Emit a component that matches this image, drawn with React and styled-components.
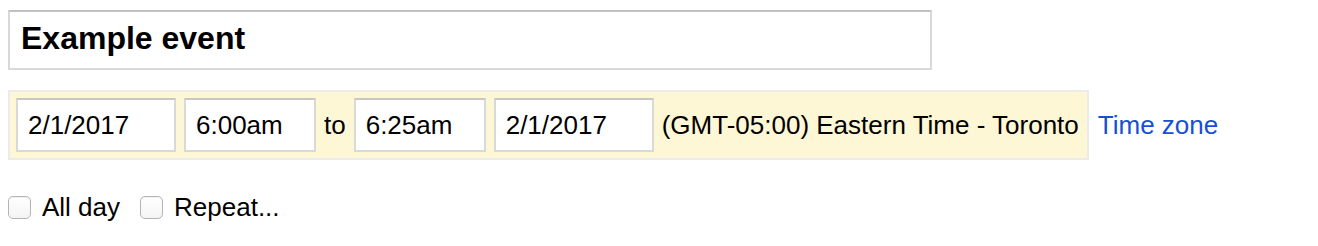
import React from 'react'
import styled, { createGlobalStyle } from 'styled-components';

const GlobalStyle = createGlobalStyle`
  body {
    margin: 0;
    background: #fff;
    font-family: "Liberation Sans", Arial, sans-serif;
    color: #000;
  }
`;

const Page = styled.div`
  padding: 10px 8px;
`;

const TitleInput = styled.input`
  display: block;
  box-sizing: border-box;
  width: 924px;
  height: 60px;
  margin: 0 0 20px;
  padding: 0 11px 3px;
  border: 2px solid #d9d9d9;
  border-top-color: #c1c1c1;
  font-family: inherit;
  font-size: 32px;
  font-weight: bold;
  color: #000;
  outline: none;
`;

const WhenRow = styled.div`
  display: flex;
  align-items: center;
`;

const DateBox = styled.div`
  display: flex;
  align-items: center;
  gap: 8px;
  padding: 6px 8px 6px 6px;
  background: #fdf7d6;
  border: 2px solid #ebebeb;
`;

const Field = styled.input`
  box-sizing: border-box;
  width: ${p => p.$wide ? 160 : 132}px;
  height: 54px;
  padding: 0 10px;
  border: 2px solid #d9d9d9;
  border-top-color: #c6c6c6;
  background: #fff;
  font-family: inherit;
  font-size: 26px;
  color: #000;
  outline: none;
`;

const Label = styled.span`
  font-size: 26px;
  line-height: 30px;
  white-space: nowrap;
`;

const Link = styled.a`
  margin-left: 9px;
  font-size: 26px;
  color: #1550d6;
  text-decoration: none;
  cursor: pointer;
`;

const Options = styled.div`
  display: flex;
  align-items: center;
  margin-top: 32px;
`;

const Check = styled.label`
  display: flex;
  align-items: center;
  gap: 11px;
  margin-right: 20px;
  font-size: 26px;
  line-height: 30px;
`;

const Box = styled.input`
  appearance: none;
  margin: 0;
  width: 23px;
  height: 23px;
  border: 1px solid #b4b4b4;
  border-radius: 5px;
  background: linear-gradient(#fff, #f4f4f4);
  box-shadow: inset 0 1px 1px rgba(0, 0, 0, 0.06);
`;

export default function App() {
  return <Page>
    <GlobalStyle />
    <TitleInput defaultValue="Example event" />

    <WhenRow>
      <DateBox>
        <Field $wide defaultValue="2/1/2017" />
        <Field defaultValue="6:00am" />
        <Label>to</Label>
        <Field defaultValue="6:25am" />
        <Field $wide defaultValue="2/1/2017" />
        <Label>(GMT-05:00) Eastern Time - Toronto</Label>
      </DateBox>
      <Link>Time zone</Link>
    </WhenRow>

    <Options>
      <Check><Box type="checkbox" />All day</Check>
      <Check><Box type="checkbox" />Repeat...</Check>
    </Options>
  </Page>
}
